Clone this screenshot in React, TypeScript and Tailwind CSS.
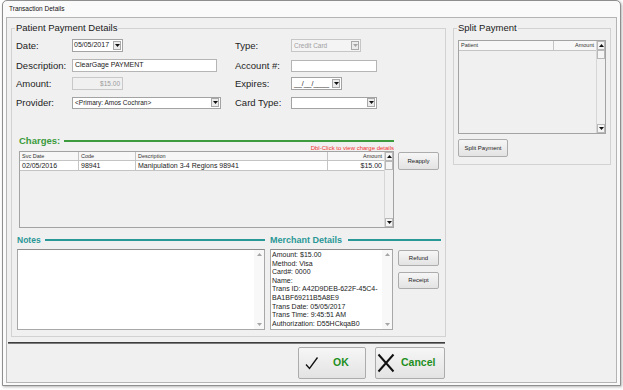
import React from 'react';

function Tri({ up, grey }: { up?: boolean; grey?: boolean }) {
  return (
    <svg width="5" height="3" viewBox="0 0 5 3" className="block">
      <path d={up ? 'M0 3H5L2.5 0Z' : 'M0 0H5L2.5 3Z'} fill={grey ? '#a6a6a6' : '#111'} />
    </svg>
  );
}

function DropBtn({ grey }: { grey?: boolean }) {
  return (
    <span className="ml-auto mr-[1px] flex h-[9px] w-[8px] shrink-0 items-center justify-center border border-[#a9a9a9] bg-[#ececec]">
      <Tri grey={grey} />
    </span>
  );
}

function Label({ children }: { children: React.ReactNode }) {
  return <div className="w-[56px] shrink-0 text-[9.5px] leading-[13px] text-[#1d1d1d]">{children}</div>;
}

function Btn({ className, children }: { className: string; children: React.ReactNode }) {
  return (
    <div
      className={`flex items-center justify-center rounded-[2px] border border-[#acacac] bg-gradient-to-b from-[#f6f6f6] to-[#e3e3e3] text-[6px] text-[#222] ${className}`}
    >
      {children}
    </div>
  );
}

function Scroll({ thumb, flat }: { thumb?: boolean; flat?: boolean }) {
  if (flat) {
    return (
      <div className="flex w-[10px] shrink-0 flex-col items-center bg-[#f8f8f8] py-[3px]">
        <Tri up grey />
        <div className="flex-1" />
        <Tri grey />
      </div>
    );
  }
  return (
    <div className="flex w-[9px] shrink-0 flex-col border-l border-[#d6d6d6] bg-[#f0f0f0]">
      <div className="flex h-[9px] items-center justify-center border border-[#b8b8b8] bg-[#f5f5f5]">
        <Tri up />
      </div>
      {thumb && <div className="h-[9px] border border-[#b8b8b8] bg-[#f5f5f5]" />}
      <div className="flex-1" />
      <div className="flex h-[9px] items-center justify-center border border-[#b8b8b8] bg-[#f5f5f5]">
        <Tri />
      </div>
    </div>
  );
}

const merchant = [
  'Amount: $15.00',
  'Method: Visa',
  'Card#: 0000',
  'Name:',
  'Trans ID: A42D9DEB-622F-45C4-',
  'BA1BF69211B5A8E9',
  'Trans Date: 05/05/2017',
  'Trans Time: 9:45:51 AM',
  'Authorization: D55HCkqaB0',
];

export default function App() {
  return (
    <div className="h-[390px] w-[623px] overflow-hidden bg-white pt-0 font-['Liberation_Sans',Arial,sans-serif] text-[#1a1a1a]">
      <div className="ml-[2px] flex h-[386px] w-[619px] flex-col rounded-t-[5px] border border-[#8e8e8e] bg-[#fafafa] px-[3px] pb-[2px] shadow-[1px_1px_3px_rgba(0,0,0,0.3)]">
        <div className="flex h-[16px] items-center pl-[3px] text-[6.5px] text-[#111]">Transaction Details</div>
        <div className="flex flex-1 border border-[#b4b4b4] bg-[#f0f0f0] pl-[1px] pt-[4px]">
          {/* left column */}
          <div className="flex w-[437px] flex-col">
            <fieldset className="ml-[3px] h-[315px] w-[432px] border border-[#d2d2d2] px-[4px]">
              <legend className="-ml-[1px] px-[1px] text-[9.5px] leading-[12px] text-[#1a1a1a]">Patient Payment Details</legend>
              <div className="mt-[5px] flex">
                <div className="flex w-[219px] flex-col">
                  <div className="flex h-[13px] items-center">
                    <Label>Date:</Label>
                    <div className="flex h-[13px] w-[51px] items-center border border-[#a3a3a3] bg-white pl-[1px] text-[7px]">
                      05/05/2017
                      <DropBtn />
                    </div>
                  </div>
                  <div className="mt-[7px] flex h-[13px] items-center">
                    <Label>Description:</Label>
                    <div className="flex h-[13px] w-[145px] items-center border border-[#b5b5b5] bg-white pl-[2px] text-[7px]">
                      ClearGage PAYMENT
                    </div>
                  </div>
                  <div className="mt-[5px] flex h-[13px] items-center">
                    <Label>Amount:</Label>
                    <div className="flex h-[13px] w-[51px] items-center justify-end border border-[#c8c8c8] bg-[#f0f0f0] pr-[2px] text-[6.5px] text-[#9a9a9a]">
                      $15.00
                    </div>
                  </div>
                  <div className="mt-[6px] flex h-[13px] items-center">
                    <Label>Provider:</Label>
                    <div className="flex h-[12px] w-[149px] items-center border border-[#a3a3a3] bg-white pl-[2px] text-[6.5px]">
                      &lt;Primary: Amos Cochran&gt;
                      <DropBtn />
                    </div>
                  </div>
                </div>
                <div className="flex flex-col">
                  <div className="flex h-[13px] items-center">
                    <Label>Type:</Label>
                    <div className="flex h-[13px] w-[70px] items-center border border-[#c6c6c6] bg-[#f4f4f4] pl-[2px] text-[6.5px] text-[#a0a0a0]">
                      Credit Card
                      <DropBtn grey />
                    </div>
                  </div>
                  <div className="mt-[7px] flex h-[13px] items-center">
                    <Label>Account #:</Label>
                    <div className="h-[12px] w-[86px] border border-[#b5b5b5] bg-white" />
                  </div>
                  <div className="mt-[5px] flex h-[13px] items-center">
                    <Label>Expires:</Label>
                    <div className="flex h-[13px] w-[51px] items-center border border-[#a3a3a3] bg-white pl-[2px] text-[7px] leading-[7px]">
                      __/__/____
                      <DropBtn />
                    </div>
                  </div>
                  <div className="mt-[6px] flex h-[13px] items-center">
                    <Label>Card Type:</Label>
                    <div className="flex h-[12px] w-[86px] items-center border border-[#a3a3a3] bg-white">
                      <DropBtn />
                    </div>
                  </div>
                </div>
              </div>

              {/* charges */}
              <div className="ml-[3px] mt-[27px] flex gap-[4px]">
                <div className="flex w-[375px] flex-col">
                  <div className="flex h-[9px] items-center">
                    <span className="text-[9.5px] font-bold leading-[9px] text-[#3a9a3a]">Charges:</span>
                    <div className="ml-[4px] h-[2px] flex-1 bg-[#3c9b3c]" />
                  </div>
                  <div className="h-[6px] text-right text-[6px] leading-[6px] text-[#f03030]">Dbl-Click to view charge details</div>
                  <div className="flex h-[77px] border border-[#a3a3a3] bg-[#f0f0f0]">
                    <div className="flex flex-1 flex-col">
                      <div className="flex h-[9px] border-b border-[#c4c4c4] bg-[#f7f7f7] text-[5.5px] leading-[8px] text-[#333]">
                        <div className="w-[59px] border-r border-[#c4c4c4] px-[2px]">Svc Date</div>
                        <div className="w-[57px] border-r border-[#c4c4c4] px-[2px]">Code</div>
                        <div className="w-[192px] border-r border-[#c4c4c4] px-[2px]">Description</div>
                        <div className="flex-1 px-[2px] text-right">Amount</div>
                      </div>
                      <div className="flex h-[10px] border-b border-[#c4c4c4] bg-white text-[7px] leading-[9px]">
                        <div className="w-[59px] border-r border-[#c4c4c4] px-[2px]">02/05/2016</div>
                        <div className="w-[57px] border-r border-[#c4c4c4] px-[2px]">98941</div>
                        <div className="w-[192px] border-r border-[#c4c4c4] px-[2px]">Manipulation 3-4 Regions 98941</div>
                        <div className="flex-1 px-[2px] text-right">$15.00</div>
                      </div>
                    </div>
                    <Scroll thumb />
                  </div>
                </div>
                <Btn className="mt-[16px] h-[18px] w-[41px]">Reapply</Btn>
              </div>

              {/* notes + merchant */}
              <div className="ml-[1px] mt-[7px] flex">
                <div className="flex w-[248px] flex-col">
                  <div className="flex h-[10px] items-center">
                    <span className="text-[8.5px] font-bold leading-[10px] text-[#2a9797]">Notes</span>
                    <div className="ml-[4px] h-[2px] flex-1 bg-[#2a9898]" />
                  </div>
                  <div className="mt-[4px] flex h-[81px] border border-[#a8a8a8] border-t-[#8c8c8c] bg-white">
                    <div className="flex-1" />
                    <Scroll flat />
                  </div>
                </div>
                <div className="ml-[5px] flex w-[171px] flex-col">
                  <div className="flex h-[10px] items-center">
                    <span className="text-[9px] font-bold leading-[10px] text-[#2a9797]">Merchant Details</span>
                    <div className="ml-[6px] h-[2px] flex-1 bg-[#2a9898]" />
                  </div>
                  <div className="mt-[4px] flex">
                    <div className="flex h-[81px] w-[123px] border border-[#a8a8a8] border-t-[#8c8c8c] bg-white">
                      <div className="flex-1 pl-[1px] pt-[1px] text-[7px] leading-[8.6px] text-[#222]">
                        {merchant.map((l) => (
                          <div key={l} className="whitespace-nowrap">{l}</div>
                        ))}
                      </div>
                      <Scroll flat />
                    </div>
                    <div className="ml-[5px] flex flex-col">
                      <Btn className="mt-[1px] h-[16px] w-[41px]">Refund</Btn>
                      <Btn className="mt-[6px] h-[17px] w-[41px]">Receipt</Btn>
                    </div>
                  </div>
                </div>
              </div>
            </fieldset>

            <div className="mt-[5px] h-[2px] w-full border-t border-[#3e3e3e] bg-[#7a7a7a]" />

            <div className="mt-[3px] flex justify-end gap-[9px] pr-[0px]">
              <Btn className="h-[32px] w-[68px] !justify-start pl-[6px]">
                <svg width="14" height="14" viewBox="0 0 14 14" className="block">
                  <path d="M1 8.5L4.5 12.5L12.5 1.5" stroke="#111" strokeWidth="1.3" fill="none" />
                </svg>
                <span className="ml-[14px] text-[10.5px] font-bold text-[#1e8f1e]">OK</span>
              </Btn>
              <Btn className="h-[32px] w-[70px] !justify-start pl-[1px]">
                <svg width="18" height="20" viewBox="0 0 18 20" className="block">
                  <path d="M1.5 1.5L16.5 18.5M16.5 1.5L1.5 18.5" stroke="#111" strokeWidth="2" fill="none" />
                </svg>
                <span className="ml-[6px] text-[10.5px] font-bold text-[#1e8f1e]">Cancel</span>
              </Btn>
            </div>
          </div>

          {/* right column */}
          <div className="ml-[8px]">
            <fieldset className="h-[143px] w-[158px] border border-[#d2d2d2] px-[4px]">
              <legend className="-ml-[1px] px-[1px] text-[9.5px] leading-[12px] text-[#1a1a1a]">Split Payment</legend>
              <div className="mt-[6px] flex h-[94px] w-[148px] border border-[#a3a3a3] bg-[#f0f0f0]">
                <div className="flex flex-1 flex-col">
                  <div className="flex h-[10px] border-b border-[#c4c4c4] bg-[#f7f7f7] text-[5.5px] leading-[9px] text-[#333]">
                    <div className="w-[95px] border-r border-[#c4c4c4] px-[2px]">Patient</div>
                    <div className="flex-1 px-[2px] text-right">Amount</div>
                  </div>
                </div>
                <Scroll thumb />
              </div>
              <Btn className="mt-[5px] h-[18px] w-[50px]">Split Payment</Btn>
            </fieldset>
          </div>
        </div>
      </div>
    </div>
  );
}
